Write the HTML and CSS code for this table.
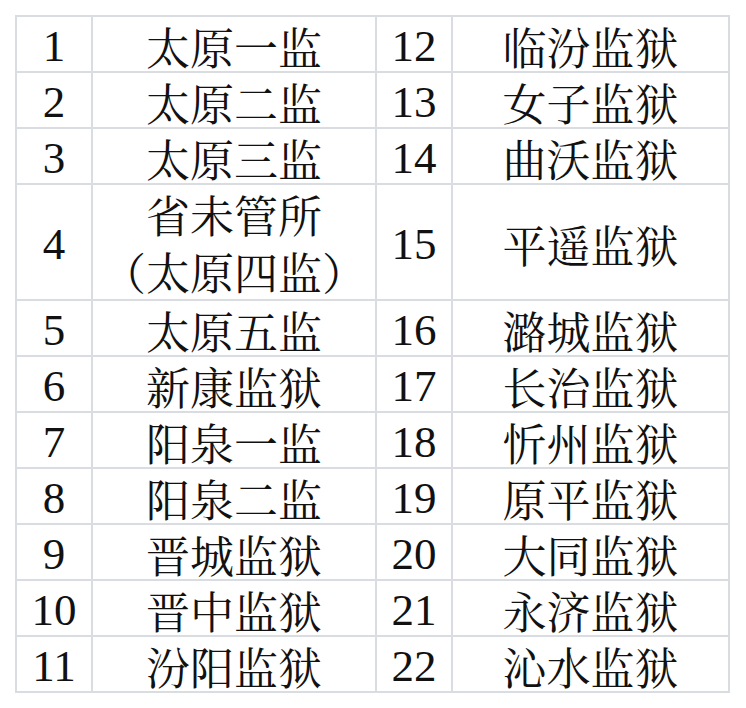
FILE: index.html
```html
<!DOCTYPE html>
<html lang="zh-CN">
<head>
<meta charset="utf-8">
<link rel="stylesheet" href="styles.css">
</head>
<body>
<div class="grid">
  <div class="cell num">1</div><div class="cell name">太原一监</div><div class="cell num">12</div><div class="cell name">临汾监狱</div>
  <div class="cell num">2</div><div class="cell name">太原二监</div><div class="cell num">13</div><div class="cell name">女子监狱</div>
  <div class="cell num">3</div><div class="cell name">太原三监</div><div class="cell num">14</div><div class="cell name">曲沃监狱</div>
  <div class="cell num">4</div><div class="cell name two">省未管所<br>（太原四监）</div><div class="cell num">15</div><div class="cell name">平遥监狱</div>
  <div class="cell num">5</div><div class="cell name">太原五监</div><div class="cell num">16</div><div class="cell name">潞城监狱</div>
  <div class="cell num">6</div><div class="cell name">新康监狱</div><div class="cell num">17</div><div class="cell name">长治监狱</div>
  <div class="cell num">7</div><div class="cell name">阳泉一监</div><div class="cell num">18</div><div class="cell name">忻州监狱</div>
  <div class="cell num">8</div><div class="cell name">阳泉二监</div><div class="cell num">19</div><div class="cell name">原平监狱</div>
  <div class="cell num">9</div><div class="cell name">晋城监狱</div><div class="cell num">20</div><div class="cell name">大同监狱</div>
  <div class="cell num">10</div><div class="cell name">晋中监狱</div><div class="cell num">21</div><div class="cell name">永济监狱</div>
  <div class="cell num">11</div><div class="cell name">汾阳监狱</div><div class="cell num">22</div><div class="cell name">沁水监狱</div>
</div>
</body>
</html>
```

FILE: styles.css
```css
html, body {
  margin: 0;
  padding: 0;
  background: #ffffff;
}
body {
  padding: 15px 0 0 15px;
}
.grid {
  display: grid;
  grid-template-columns: 74px 282px 74px 275px;
  grid-template-rows: 54px 54px 54px 114px repeat(7, 54px);
  gap: 2px;
  padding: 2px;
  background: #d9dce0;
  width: max-content;
}
.cell {
  background: #ffffff;
  display: flex;
  align-items: center;
  justify-content: center;
  color: #111111;
  text-align: center;
  box-sizing: border-box;
}
.num {
  font-family: "Liberation Serif", "Times New Roman", serif;
  font-size: 45px;
  line-height: 48px;
  padding-top: 4px;
}
.name {
  font-family: "Noto Serif CJK SC", "Noto Sans CJK SC", sans-serif;
  font-size: 44px;
  line-height: 48px;
  padding-top: 3px;
}
.two {
  line-height: 57px;
  padding-top: 2px;
}
```
